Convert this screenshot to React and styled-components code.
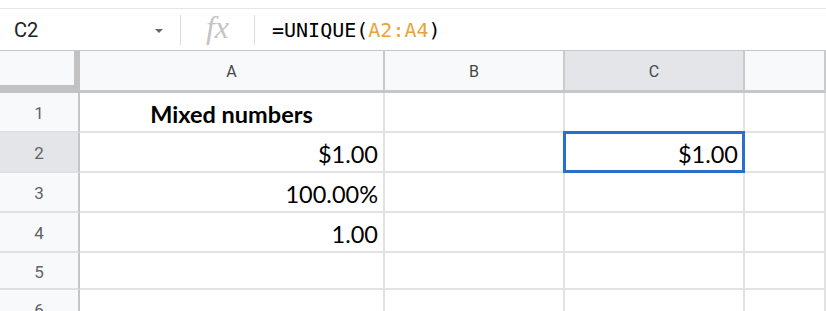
import styled, { createGlobalStyle } from "styled-components";

const GlobalStyle = createGlobalStyle`
  body {
    margin: 0;
    background: #ffffff;
    font-family: Roboto, Arial, sans-serif;
    overflow: hidden;
  }
`;

const Page = styled.div`
  width: 826px;
  height: 311px;
  overflow: hidden;
  background: #fff;
`;

const TopStrip = styled.div`
  height: 9px;
  border-bottom: 1px solid #e6e6e6;
  box-sizing: border-box;
`;

const FormulaBar = styled.div`
  display: flex;
  align-items: center;
  height: 42px;
  border-bottom: 1px solid #c7c7c7;
  box-sizing: border-box;
`;

const NameBox = styled.div`
  width: 180px;
  box-sizing: border-box;
  display: flex;
  align-items: center;
  justify-content: space-between;
  padding: 0 17px 0 14px;
  font-size: 20px;
  color: #202124;
`;

const Caret = styled.span`
  width: 0;
  height: 0;
  border-left: 4px solid transparent;
  border-right: 4px solid transparent;
  border-top: 4px solid #666;
  margin-top: 2px;
`;

const Divider = styled.div`
  width: 1px;
  height: 30px;
  background: #dadce0;
`;

const FxBox = styled.div`
  width: 73px;
  text-align: center;
  font-family: "Liberation Serif", "DejaVu Serif", serif;
  font-style: italic;
  font-size: 32px;
  color: #c4c4c4;
  line-height: 1;
  margin-top: -5px;
`;

const Formula = styled.div`
  padding-left: 17px;
  font-family: "DejaVu Sans Mono", "Liberation Mono", monospace;
  font-size: 20px;
  color: #000;
`;

const Ref = styled.span`
  color: #e8a33d;
`;

const Grid = styled.div`
  display: grid;
  grid-template-columns: 80px 305px 180px 180px 1fr;
  grid-template-rows: 42px 40px 40px 40px 40px 37px 40px;
`;

const Corner = styled.div`
  background: #f8f9fa;
  border-right: 6px solid #c2c2c2;
  border-bottom: 8px solid #c2c2c2;
  box-sizing: border-box;
`;

const ColHead = styled.div`
  background: ${({ $active }) => ($active ? "#e3e5e8" : "#f8f9fa")};
  border-right: 2px solid #c8cacc;
  border-bottom: 3px solid #c4c7c5;
  box-sizing: border-box;
  display: flex;
  align-items: center;
  justify-content: center;
  font-size: 16px;
  color: #444746;
  padding-top: 1px;
`;

const RowHead = styled.div`
  background: ${({ $active }) => ($active ? "#e3e5e8" : "#f8f9fa")};
  border-right: 2px solid #c4c7c5;
  border-bottom: 2px solid #e0e0e0;
  box-sizing: border-box;
  display: flex;
  align-items: center;
  justify-content: center;
  font-size: 17px;
  color: #5f6368;
  padding-top: 2px;
`;

const Cell = styled.div`
  position: relative;
  border-right: 2px solid #e2e2e2;
  border-bottom: 2px solid #e2e2e2;
  box-sizing: border-box;
  display: flex;
  align-items: center;
  justify-content: ${({ $align }) =>
    $align === "center" ? "center" : $align === "right" ? "flex-end" : "flex-start"};
  padding: 3px 5px 0 5px;
  font-family: Lato, "Open Sans", sans-serif;
  font-size: 23.5px;
  font-weight: ${({ $bold }) => ($bold ? 700 : 400)};
  color: #000;
  white-space: nowrap;

  ${({ $selected }) =>
    $selected &&
    `
    &::after {
      content: "";
      position: absolute;
      left: -2px;
      top: -2px;
      right: -2px;
      bottom: -2px;
      border: 3px solid #2a6fcd;
      pointer-events: none;
    }
  `}
`;

const columns = ["A", "B", "C", ""];

const rows = [
  { n: 1, cells: [{ v: "Mixed numbers", align: "center", bold: true }, {}, {}, {}] },
  { n: 2, cells: [{ v: "$1.00", align: "right" }, {}, { v: "$1.00", align: "right", selected: true }, {}] },
  { n: 3, cells: [{ v: "100.00%", align: "right" }, {}, {}, {}] },
  { n: 4, cells: [{ v: "1.00", align: "right" }, {}, {}, {}] },
  { n: 5, cells: [{}, {}, {}, {}] },
  { n: 6, cells: [{}, {}, {}, {}] },
];

export default function App() {
  return (
    <Page>
      <GlobalStyle />
      <TopStrip />
      <FormulaBar>
        <NameBox>
          C2
          <Caret />
        </NameBox>
        <Divider />
        <FxBox>fx</FxBox>
        <Divider />
        <Formula>
          =UNIQUE(<Ref>A2:A4</Ref>)
        </Formula>
      </FormulaBar>
      <Grid>
        <Corner />
        {columns.map((c, i) => (
          <ColHead key={i} $active={c === "C"}>
            {c}
          </ColHead>
        ))}
        {rows.map((r) => [
          <RowHead key={`h${r.n}`} $active={r.n === 2}>
            {r.n}
          </RowHead>,
          ...r.cells.map((cell, i) => (
            <Cell
              key={`${r.n}-${i}`}
              $align={cell.align}
              $bold={cell.bold}
              $selected={cell.selected}
            >
              {cell.v}
            </Cell>
          )),
        ])}
      </Grid>
    </Page>
  );
}
